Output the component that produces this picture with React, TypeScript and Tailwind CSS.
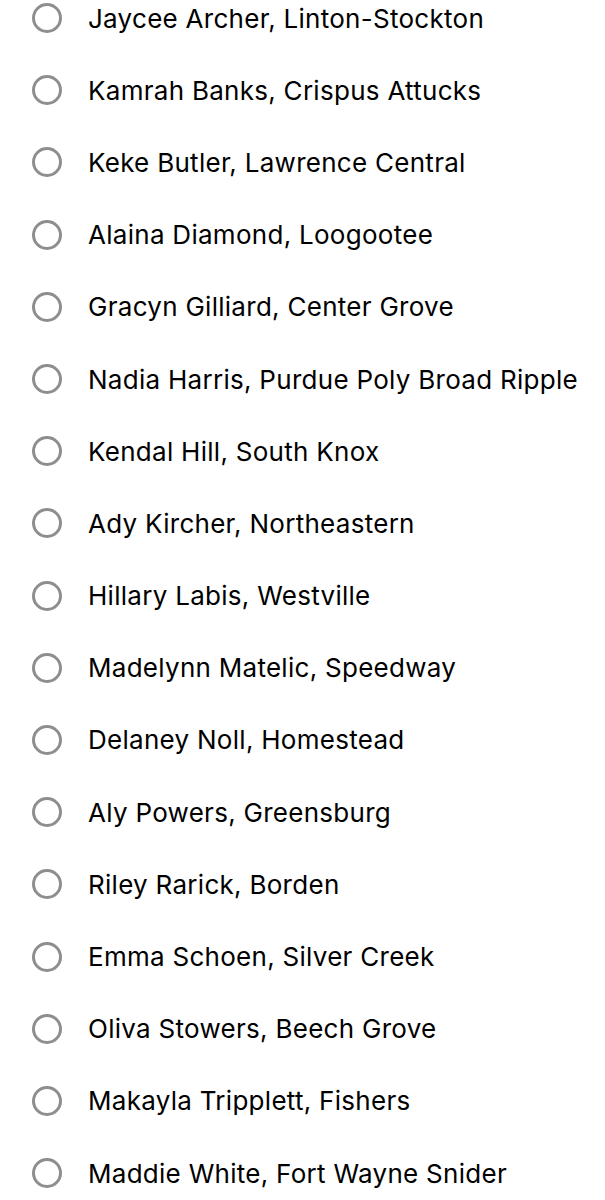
import React from "react";

const items = [
  "Jaycee Archer, Linton-Stockton",
  "Kamrah Banks, Crispus Attucks",
  "Keke Butler, Lawrence Central",
  "Alaina Diamond, Loogootee",
  "Gracyn Gilliard, Center Grove",
  "Nadia Harris, Purdue Poly Broad Ripple",
  "Kendal Hill, South Knox",
  "Ady Kircher, Northeastern",
  "Hillary Labis, Westville",
  "Madelynn Matelic, Speedway",
  "Delaney Noll, Homestead",
  "Aly Powers, Greensburg",
  "Riley Rarick, Borden",
  "Emma Schoen, Silver Creek",
  "Oliva Stowers, Beech Grove",
  "Makayla Tripplett, Fishers",
  "Maddie White, Fort Wayne Snider",
];

export default function App() {
  return (
    <div className="w-[605px] h-[1200px] overflow-hidden bg-white" style={{ fontFamily: "Inter, 'Liberation Sans', sans-serif" }}>
      <div className="-mt-[18px] flex flex-col">
        {items.map((t) => (
          <div key={t} className="flex items-center h-[72.2px] shrink-0">
            <div className="ml-[32px] w-[30px] h-[30px] rounded-full border-[3px] border-[#8e8e8e] shrink-0" />
            <span className="ml-[26px] text-[26px] text-black tracking-[0.28px] whitespace-nowrap">{t}</span>
          </div>
        ))}
      </div>
    </div>
  );
}
